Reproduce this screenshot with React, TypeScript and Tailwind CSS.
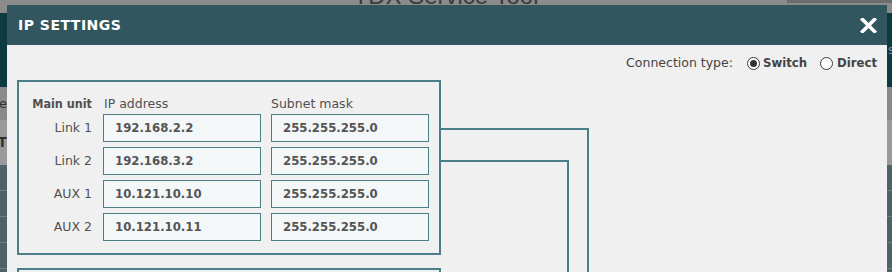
import React from "react";

const reg = "font-['DejaVu_Sans',sans-serif]";
const bold = "font-['DejaVu_Sans_Condensed','DejaVu_Sans',sans-serif] font-bold";

const rows = [
  ["Link 1", "192.168.2.2", "255.255.255.0"],
  ["Link 2", "192.168.3.2", "255.255.255.0"],
  ["AUX 1", "10.121.10.10", "255.255.255.0"],
  ["AUX 2", "10.121.10.11", "255.255.255.0"],
];

function Radio({ checked }: { checked?: boolean }) {
  return (
    <span className="w-[13px] h-[13px] rounded-full border border-[#3a3a3a] bg-white flex items-center justify-center shrink-0">
      {checked && <span className="w-[7px] h-[7px] rounded-full bg-[#333]" />}
    </span>
  );
}

export default function App() {
  return (
    <div className="relative w-[892px] h-[272px] overflow-hidden bg-[#8b8b8b]">
      {/* dimmed page behind the dialog */}
      <div className="flex flex-col h-full">
        <div className="grid h-[13px] overflow-hidden bg-[#8b8b8b]">
          <div className="col-start-1 row-start-1 flex justify-center">
            <span className="font-['Liberation_Sans',sans-serif] text-[24px] leading-[24px] -mt-[16px] text-[#3a3a3a]">
              TDX Service Tool
            </span>
          </div>
          <div className="col-start-1 row-start-1 flex justify-end">
            <div className="w-[105px] h-[3px] bg-[#6d6d6d]" />
          </div>
        </div>
        <div className="h-[74px] bg-[#0c3a40] flex justify-end items-center">
          <span className={`${reg} text-[13px] text-[#7d9699] w-[4px] overflow-hidden`}>s</span>
        </div>
        <div className="h-[33px] bg-[#8a8a8a] flex items-center">
          <div className="w-[7px] overflow-hidden flex justify-end">
            <span className={`${reg} text-[13px] text-[#2e2e2e] shrink-0`}>ne</span>
          </div>
        </div>
        <div className="h-[45px] bg-[#9a9a9a] flex items-center">
          <span className={`${bold} text-[14px] text-[#2e2e2e] -ml-[2px]`}>T</span>
        </div>
        <div className="flex-1 bg-[#4e6367] flex flex-col">
          <div className="h-[26px] border-b border-[#6e8084]" />
          <div className="h-[26px] border-b border-[#6e8084]" />
          <div className="h-[26px] border-b border-[#6e8084]" />
          <div className="h-[26px] border-b border-[#6e8084]" />
        </div>
      </div>

      {/* dialog */}
      <div className="absolute left-[7px] top-[5px] w-[880px] h-[300px] bg-[#f0f0f0] flex flex-col">
        <div className="h-[40px] shrink-0 bg-[#31565f] flex items-center justify-between pl-[11px] pr-[10px]">
          <span className={`${reg} text-white font-bold text-[14px] tracking-[0.5px]`}>IP SETTINGS</span>
          <svg width="17" height="15" viewBox="0 0 17 15">
            <path d="M2.5 1.5 L14.5 13.5 M14.5 1.5 L2.5 13.5" stroke="white" strokeWidth="3.6" strokeLinecap="square" />
          </svg>
        </div>

        <div className="flex flex-col px-[10px]">
          <div className="h-[20px] mt-[8px] flex items-center justify-end text-[#444]">
            <span className={`${reg} text-[12.5px]`}>Connection type:</span>
            <span className="ml-[14px]"><Radio checked /></span>
            <span className={`${bold} text-[13px] ml-[3px]`}>Switch</span>
            <span className="ml-[13px]"><Radio /></span>
            <span className={`${bold} text-[13px] ml-[4px]`}>Direct</span>
          </div>

          <div className="w-[424px] mt-[7px] border-2 border-[#4b7f88] pt-[14px] pb-[12px] px-[10px]">
            <div className="h-[17px] mb-[1px] flex items-center text-[#505050]">
              <span className={`${bold} text-[12.5px] w-[63px] text-right`}>Main unit</span>
              <span className={`${reg} text-[12.5px] ml-[12px] w-[157px]`}>IP address</span>
              <span className={`${reg} text-[12.5px] ml-[10px]`}>Subnet mask</span>
            </div>
            <div className="flex flex-col gap-[5px]">
              {rows.map(([label, ip, mask]) => (
                <div key={label} className="flex items-center">
                  <span className={`${reg} text-[12.5px] text-[#505050] w-[63px] text-right`}>{label}</span>
                  <div className={`${bold} text-[13px] text-[#555] ml-[11px] w-[158px] h-[28px] border border-[#4b7f88] bg-[#f4f7f8] pl-[11px] flex items-center`}>
                    {ip}
                  </div>
                  <div className={`${bold} text-[13px] text-[#555] ml-[10px] w-[158px] h-[28px] border border-[#4b7f88] bg-[#f4f7f8] pl-[11px] flex items-center`}>
                    {mask}
                  </div>
                </div>
              ))}
            </div>
          </div>

          <div className="w-[424px] mt-[13px] h-[30px] border-2 border-b-0 border-[#4b7f88]" />
        </div>
      </div>

      {/* connector lines */}
      <svg className="absolute left-0 top-0 pointer-events-none" width="892" height="272">
        <rect x="441" y="128" width="148" height="2" fill="#4b7f88" />
        <rect x="587" y="128" width="2" height="144" fill="#4b7f88" />
        <rect x="441" y="160" width="128" height="2" fill="#4b7f88" />
        <rect x="567" y="160" width="2" height="112" fill="#4b7f88" />
      </svg>
    </div>
  );
}
